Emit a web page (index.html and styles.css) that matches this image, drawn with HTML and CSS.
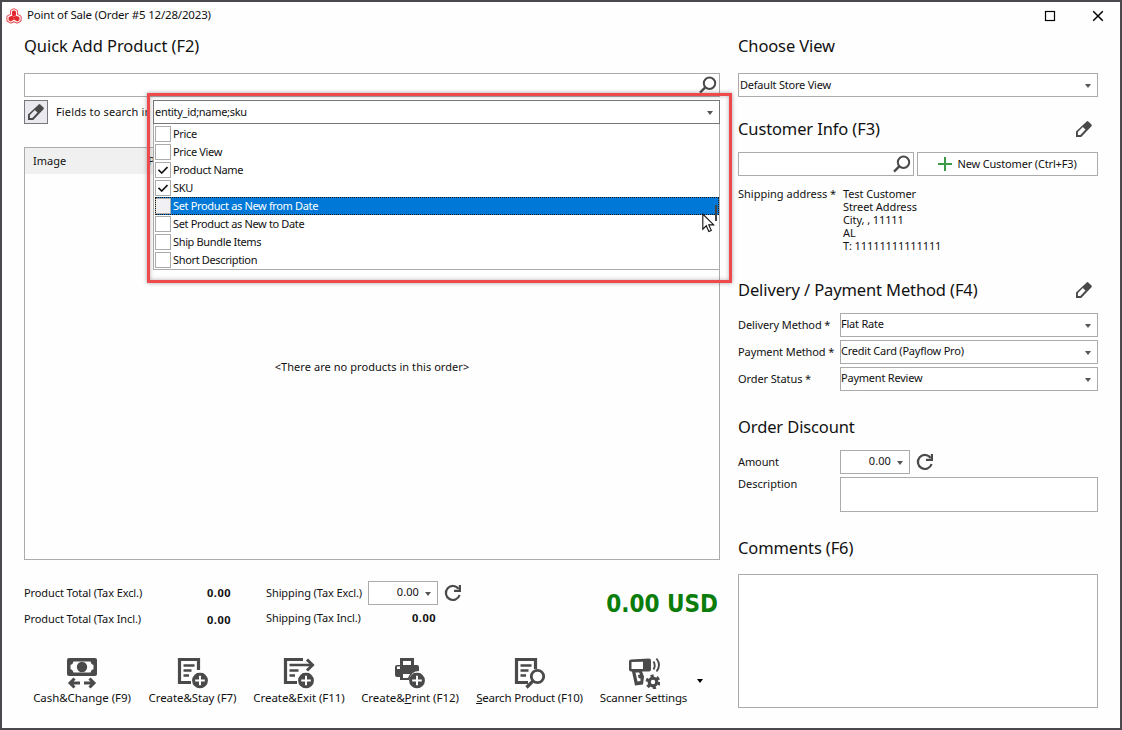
FILE: index.html
```html
<!DOCTYPE html>
<html lang="en">
<head>
  <meta charset="UTF-8">
  <meta name="viewport" content="width=device-width, initial-scale=1.0">
  <title>Point of Sale</title>
  <link rel="stylesheet" href="styles.css">
</head>
<body>
  <!-- shared icons -->
  <svg class="sprite" width="0" height="0">
    <symbol id="search" viewBox="0 0 18 18">
      <circle cx="10.5" cy="7.2" r="5.7" fill="none" stroke="#4a4a4a" stroke-width="2"/>
      <path d="M6.5 11.2L1 16.6" stroke="#4a4a4a" stroke-width="2.4"/>
    </symbol>
    <symbol id="pencil" viewBox="0 0 18 18">
      <path fill="#4a4a4a" fill-rule="evenodd" d="M1 17v-5.400L11.700 1.400q.8-.8 1.600 0l3.200 3.200q.8.8 0 1.600L6.200 17zM2.900 14.900h2.400l5.200-5.300-2.700-2.600-4.900 5z"/>
    </symbol>
    <symbol id="refresh" viewBox="0 0 18 18">
      <path d="M14.600 4.900A7 7 0 1 0 15.600 11" fill="none" stroke="#4a4a4a" stroke-width="2.200"/>
      <path d="M17 1v7h-7V5.800h4.800V1z" fill="#4a4a4a"/>
    </symbol>
    <symbol id="check" viewBox="0 0 10 8">
      <path d="M.5 3.800l3.200 3.200L9.500 1" fill="none" stroke="#111" stroke-width="1.600"/>
    </symbol>
    <symbol id="plus-badge" viewBox="0 0 16 16">
      <circle cx="8" cy="8" r="7.900" fill="#4a4a4a"/>
      <path d="M8 3.200v9.600M3.200 8h9.600" stroke="#fff" stroke-width="2"/>
    </symbol>
  </svg>

  <div class="window">
    <div class="titlebar">
      <svg class="logo" viewBox="0 0 16 16">
        <path d="M8 1.800l2.300 1.300v3.700l3.700 2v3.500L11.300 14 8 12.500 4.700 14 2 12.300V8.800l3.700-2V3.100z" fill="#fff" stroke="#e4474b" stroke-width="3.200" stroke-linejoin="round"/>
        <path d="M8 1.800l2.300 1.300v3.700l3.700 2v3.500L11.300 14 8 12.500 4.700 14 2 12.300V8.800l3.700-2V3.100z" fill="#fff" stroke="#fff" stroke-width="1.200" stroke-linejoin="round"/>
        <path d="M8 2.200l2 1.300v3.700L8 8.800 6 7.200V3.500zM2.600 9.100L6 7.700l2 1.300-.2 2.700-3.200 1.700-2-1.200zM13.400 9.100L10 7.700 8 9l.2 2.700 3.200 1.700 2-1.200z" fill="#e2262c"/>
      </svg>
      <span class="title">Point of Sale (Order #5 12/28/2023)</span>
      <svg class="win-btn" viewBox="0 0 12 12"><rect x="1.500" y="1.500" width="9" height="9" fill="none" stroke="#000" stroke-width="1.200"/></svg>
      <svg class="win-btn" viewBox="0 0 12 12"><path d="M1.200 1.200l9.600 9.600M10.800 1.200L1.200 10.800" stroke="#000" stroke-width="1.500"/></svg>
    </div>

    <div class="content">
      <div class="left">
        <h2 class="quick">Quick Add Product (F2)</h2>
        <div class="field search-field"><svg class="icon"><use href="#search"/></svg></div>

        <div class="fields-row">
          <button class="edit-btn"><svg class="icon"><use href="#pencil"/></svg></button>
          <label class="fields-label">Fields to search in</label>
          <div class="combo">
            <div class="combo-value">entity_id;name;sku<i class="arrow"></i></div>
            <ul class="combo-list">
              <li><span class="box"></span><span class="name">Price</span></li>
              <li><span class="box"></span><span class="name">Price View</span></li>
              <li><span class="box"><svg><use href="#check"/></svg></span><span class="name">Product Name</span></li>
              <li><span class="box"><svg><use href="#check"/></svg></span><span class="name">SKU</span></li>
              <li class="selected"><span class="box"></span><span class="name">Set Product as New from Date</span></li>
              <li><span class="box"></span><span class="name">Set Product as New to Date</span></li>
              <li><span class="box"></span><span class="name">Ship Bundle Items</span></li>
              <li><span class="box"></span><span class="name">Short Description</span></li>
            </ul>
            <div class="highlight"></div>
            <span class="scroll-mark"></span>
            <svg class="cursor" viewBox="0 0 13 20"><path d="M.8 1v15.200l3.500-3.400 2.500 5.700 2.500-1.100-2.500-5.500h4.900z" fill="#fff" stroke="#111" stroke-width="1.100"/></svg>
          </div>
        </div>

        <div class="products">
          <div class="products-head"><span class="col-image">Image</span><span>P</span></div>
          <div class="products-empty">&lt;There are no products in this order&gt;</div>
        </div>

        <div class="totals">
          <div class="total-col product-total">
            <div class="total-row"><span>Product Total (Tax Excl.)</span><b>0.00</b></div>
            <div class="total-row"><span>Product Total (Tax Incl.)</span><b>0.00</b></div>
          </div>
          <div class="total-col shipping-total">
            <div class="total-row"><span>Shipping (Tax Excl.)</span><div class="field spin">0.00<i class="arrow"></i></div><svg class="icon"><use href="#refresh"/></svg></div>
            <div class="total-row second"><span>Shipping (Tax Incl.)</span><b>0.00</b></div>
          </div>
          <div class="grand-total">0.00 USD</div>
        </div>

        <div class="toolbar">
          <div class="tool">
            <svg viewBox="0 0 32 32">
              <path fill="#4a4a4a" fill-rule="evenodd" d="M3 1h26q2 0 2 2v14q0 2-2 2H3q-2 0-2-2V3q0-2 2-2zM7.500 4.500Q7 7.500 4.500 8v4q2.500.5 3 3.500h17q.5-3 3-3.500V8q-2.500-.5-3-3.500z"/>
              <circle cx="16" cy="10" r="5.200" fill="#4a4a4a"/>
              <path d="M14 26H5M18 26h9M8.500 21.500L4 26l4.500 4.500M23.500 21.500L28 26l-4.500 4.500" fill="none" stroke="#4a4a4a" stroke-width="3"/>
            </svg>
            <span>Cash&amp;Change (F9)</span>
          </div>
          <div class="tool">
            <svg viewBox="0 0 32 32">
              <path d="M14 25.500H2.500V2.500h19V13" fill="none" stroke="#4a4a4a" stroke-width="3.200"/>
              <path d="M6.500 8.500h11M6.500 13.500h8M6.500 18.500h5.500" stroke="#4a4a4a" stroke-width="2.400"/>
              <use href="#plus-badge" x="15" y="15.500" width="16" height="16"/>
            </svg>
            <span>Create&amp;Stay (F7)</span>
          </div>
          <div class="tool">
            <svg viewBox="0 0 32 32">
              <path d="M14 25.500H2.500V2.500H20" fill="none" stroke="#4a4a4a" stroke-width="3.200"/>
              <path d="M6.500 8h22M6.500 13.500h9M6.500 18.500h5.500" stroke="#4a4a4a" stroke-width="2.600"/>
              <path d="M24 2.500L29.500 8 24 13.500" fill="none" stroke="#4a4a4a" stroke-width="3"/>
              <use href="#plus-badge" x="15" y="15.500" width="16" height="16"/>
            </svg>
            <span>Create&amp;Exit (F11)</span>
          </div>
          <div class="tool">
            <svg viewBox="0 0 32 32">
              <path fill="#4a4a4a" fill-rule="evenodd" d="M6 8V1h14v7h3q2 0 2 2v4q-8 0-10 9H6v-3H3q-2 0-2-2v-8q0-2 2-2zM9 4v4h8V4zM3 9.500v2.500h3V9.500zM9 17v4h5l2-4z"/>
              <use href="#plus-badge" x="15" y="15.500" width="16" height="16"/>
            </svg>
            <span>Create&amp;<u>P</u>rint (F12)</span>
          </div>
          <div class="tool">
            <svg viewBox="0 0 32 32">
              <path d="M14 25.500H2.500V2.500h19V12" fill="none" stroke="#4a4a4a" stroke-width="3.200"/>
              <path d="M6.500 8.500h11M6.500 13.500h8M6.500 18.500h5.500" stroke="#4a4a4a" stroke-width="2.400"/>
              <circle cx="23.500" cy="19.500" r="6.200" fill="#fff" stroke="#4a4a4a" stroke-width="2.800"/>
              <path d="M19 24l-6.500 6.500" stroke="#4a4a4a" stroke-width="3.200"/>
            </svg>
            <span><u>S</u>earch Product (F10)</span>
          </div>
          <div class="tool">
            <svg viewBox="0 0 32 32">
              <path fill="#4a4a4a" fill-rule="evenodd" d="M3 2.500l18-1q2 0 2 2v9q0 2-2 2h-7l2 5-1 8-8 1L4 14.500H3q-2 0-2-2v-8q0-2 2-2zM3.500 5v7H15V4.800zM7.500 15.500l2 9 3-.5v-2.500l-2-.5-.5-3 2-.5-.8-2z"/>
              <path d="M25.500 4.500q2.500 4 0 8M28.500 1.500q5 6.500 0 13" fill="none" stroke="#4a4a4a" stroke-width="1.900"/>
              <circle cx="25" cy="25" r="3.800" fill="#fff" stroke="#4a4a4a" stroke-width="3.200"/>
              <circle cx="25" cy="25" r="6" fill="none" stroke="#4a4a4a" stroke-width="2.800" stroke-dasharray="3.140 3.140"/>
            </svg>
            <span>Scanner Settings</span>
          </div>
          <i class="arrow more"></i>
        </div>
      </div>

      <div class="right">
        <h2 class="view-h">Choose View</h2>
        <div class="field select store">Default Store View<i class="arrow"></i></div>

        <div class="head-row customer"><h2>Customer Info (F3)</h2><svg class="icon"><use href="#pencil"/></svg></div>
        <div class="customer-row">
          <div class="field search-field"><svg class="icon"><use href="#search"/></svg></div>
          <button class="new-btn"><svg viewBox="0 0 14 14"><path d="M7 0v14M0 7h14" stroke="#3c9a46" stroke-width="2"/></svg>New Customer (Ctrl+F3)</button>
        </div>
        <div class="address">
          <span>Shipping address *</span>
          <div class="address-lines">Test Customer<br>Street Address<br>City, , 11111<br>AL<br>T: 11111111111111</div>
        </div>

        <div class="head-row delivery"><h2>Delivery / Payment Method (F4)</h2><svg class="icon"><use href="#pencil"/></svg></div>
        <div class="form">
          <label>Delivery Method *</label><div class="field select">Flat Rate<i class="arrow"></i></div>
          <label>Payment Method *</label><div class="field select">Credit Card (Payflow Pro)<i class="arrow"></i></div>
          <label>Order Status *</label><div class="field select">Payment Review<i class="arrow"></i></div>
        </div>

        <h2 class="discount">Order Discount</h2>
        <div class="form">
          <label>Amount</label>
          <div class="amount"><div class="field spin">0.00<i class="arrow"></i></div><svg class="icon"><use href="#refresh"/></svg></div>
          <label class="desc-label">Description</label><div class="field desc"></div>
        </div>

        <h2 class="comments-h">Comments (F6)</h2>
        <div class="field comments"></div>
      </div>
    </div>
  </div>
</body>
</html>
```
FILE: styles.css
```css
* {
  box-sizing: border-box;
}

body {
  margin: 0;
  font-family: "Noto Sans", "Open Sans", sans-serif;
  font-size: 11px;
  color: #111;
}

.sprite {
  position: absolute;
}

.window {
  width: 1122px;
  height: 730px;
  border: 2px solid #4a494d;
  background: #fefefe;
  overflow: hidden;
}

.titlebar {
  display: flex;
  align-items: center;
  height: 26px;
  padding: 0 16px 0 4px;
}

.logo {
  width: 16px;
  height: 16px;
  margin: 2px 5px 0 0;
}

.title {
  flex: 1;
  padding-bottom: 2px;
  font-size: 11.5px;
  letter-spacing: -0.18px;
  white-space: nowrap;
}

.win-btn {
  width: 12px;
  height: 12px;
  margin-left: 36px;
  margin-top: 2px;
}

.content {
  display: flex;
  gap: 18px;
  padding: 6px 22px 0;
}

.left {
  width: 696px;
}

.right {
  width: 360px;
}

h2 {
  margin: 0;
  height: 24px;
  line-height: 24px;
  font-size: 16.5px;
  font-weight: 400;
  letter-spacing: -0.12px;
  white-space: nowrap;
}

.icon {
  width: 18px;
  height: 18px;
  flex: none;
}

.field {
  display: flex;
  align-items: center;
  height: 24px;
  border: 1px solid #ababab;
  background: #fff;
}

.search-field {
  justify-content: flex-end;
  padding-right: 2px;
}

.quick {
  margin-bottom: 15px;
  letter-spacing: -0.05px;
}

.arrow {
  width: 0;
  height: 0;
  margin-left: auto;
  border: 3.5px solid transparent;
  border-top: 4px solid #555;
  border-bottom: 0;
}

/* field picker */
.fields-row {
  display: flex;
  align-items: center;
  height: 24px;
  margin-top: 3px;
}

.edit-btn {
  display: flex;
  align-items: center;
  justify-content: center;
  width: 24px;
  height: 24px;
  padding: 0;
  border: 1px solid #77777b;
  background: #e9e9ef;
}

.fields-label {
  width: 100px;
  padding: 0 0 2px 8px;
  letter-spacing: 0.15px;
  white-space: nowrap;
  overflow: hidden;
}

.combo {
  position: relative;
  z-index: 2;
  width: 567px;
  margin-left: auto;
}

.combo-value {
  display: flex;
  align-items: center;
  height: 24px;
  padding: 0 6px 2px 1px;
  border: 1px solid #777;
  background: #fff;
  letter-spacing: -0.3px;
}

.combo-value .arrow {
  margin-top: 3px;
}

.combo-list {
  position: absolute;
  top: 24px;
  left: 0;
  width: 567px;
  height: 146px;
  margin: 0;
  padding: 1px 0 0 1px;
  list-style: none;
  border: 1px solid #ababab;
  border-top: 0;
  background: #fff;
}

.combo-list li {
  display: flex;
  align-items: center;
  height: 18px;
  letter-spacing: -0.35px;
}

.name {
  padding-bottom: 2px;
}

.box {
  display: flex;
  align-items: center;
  justify-content: center;
  width: 16px;
  height: 16px;
  margin-right: 2px;
  border: 1px solid #ababab;
  background: #fff;
}

.box svg {
  width: 10px;
  height: 8px;
}

.combo-list .selected {
  color: #fff;
  background: #0078d7;
  outline: 1px dotted #201808;
  outline-offset: -1px;
}

.selected .box {
  background: #f0f0f5;
}

.highlight {
  position: absolute;
  top: -7px;
  left: -6px;
  width: 585px;
  height: 190px;
  border: 3px solid #ed4a4d;
  box-shadow: 0 0 4px rgba(90, 60, 60, 0.5), inset 0 0 4px rgba(90, 60, 60, 0.4);
}

.scroll-mark {
  position: absolute;
  top: 105px;
  right: 3px;
  width: 2px;
  height: 16px;
  background: #444;
}

.cursor {
  position: absolute;
  top: 113px;
  left: 549px;
  width: 13px;
  height: 20px;
}

/* products */
.products {
  height: 413px;
  margin-top: 23px;
  border: 1px solid #ababab;
}

.products-head {
  display: flex;
  align-items: center;
  width: 140px;
  height: 26px;
  padding: 0 0 2px 8px;
  background: #f0f0f0;
}

.col-image {
  width: 115px;
  flex: none;
}

.products-empty {
  padding-top: 185px;
  text-align: center;
  letter-spacing: 0.06px;
}

/* totals */
.totals {
  display: flex;
  height: 67px;
  padding-top: 21px;
}

.total-row {
  display: flex;
  align-items: center;
  height: 24px;
  white-space: nowrap;
}

.total-row + .total-row {
  margin-top: 2px;
}

.total-row + .second {
  margin-top: 1px;
}

.total-row span {
  padding-bottom: 2px;
  letter-spacing: -0.1px;
}

.total-row b {
  letter-spacing: 0.5px;
}

.product-total {
  width: 207px;
}

.product-total .total-row {
  justify-content: space-between;
}

.product-total .total-row:first-child b {
  padding-bottom: 2px;
}

.shipping-total {
  width: 232px;
  margin-left: 35px;
}

.shipping-total span {
  width: 102px;
}

.shipping-total b {
  width: 68px;
  padding-bottom: 2px;
  text-align: right;
}

.total-row .icon {
  margin-left: 6px;
}

.spin {
  justify-content: flex-end;
  width: 70px;
  padding: 0 6px 3px 0;
  letter-spacing: 0.1px;
}

.spin .arrow {
  margin: 4px 0 0 6px;
}

.grand-total {
  margin-left: auto;
  padding-right: 2px;
  font-family: "DejaVu Sans Condensed", "DejaVu Sans", sans-serif;
  font-stretch: condensed;
  font-size: 24px;
  line-height: 46px;
  font-weight: 700;
  color: #0a7d0a;
  white-space: nowrap;
}

/* toolbar */
.toolbar {
  display: grid;
  grid-template-columns: 100px 89px 92px 98px 109px 87px 10px;
  column-gap: 16px;
  padding: 30px 0 0 8px;
}

.tool {
  display: flex;
  flex-direction: column;
  align-items: center;
  font-size: 11.5px;
  letter-spacing: -0.06px;
  white-space: nowrap;
}

.tool svg {
  width: 32px;
  height: 32px;
}

.tool span {
  line-height: 18px;
}

.tool:nth-child(n+5) span {
  letter-spacing: -0.2px;
}

.more {
  margin: 22px 0 0 -6px;
  border-top-color: #000;
}

/* right side */
.view-h {
  margin-bottom: 15px;
}

.select {
  padding: 0 6px 3px 0;
  letter-spacing: -0.22px;
}

.select .arrow {
  margin-top: 4px;
}

.store {
  padding: 0 6px 2px 1px;
}

.head-row {
  display: flex;
  align-items: center;
  justify-content: space-between;
  padding-right: 5px;
  margin-bottom: 11px;
}

.customer {
  margin-top: 20px;
}

.customer-row {
  display: grid;
  grid-template-columns: 176px 181px;
  gap: 3px;
}

.new-btn {
  display: flex;
  align-items: center;
  justify-content: center;
  height: 24px;
  padding: 0 0 1px;
  border: 1px solid #ababab;
  background: #fff;
  font: inherit;
  letter-spacing: -0.16px;
  color: #111;
}

.new-btn svg {
  width: 14px;
  height: 14px;
  margin-right: 5px;
}

.address {
  display: flex;
  height: 65px;
  margin-top: 11px;
  line-height: 13px;
  letter-spacing: -0.1px;
}

.address span {
  width: 105px;
  letter-spacing: 0;
  white-space: nowrap;
}

.delivery {
  margin-top: 26px;
}

.form {
  display: grid;
  grid-template-columns: 102px 258px;
  row-gap: 3px;
  align-items: center;
}

.form label {
  padding-bottom: 2px;
  letter-spacing: -0.1px;
  white-space: nowrap;
}

.discount {
  margin: 24px 0 11px;
}

.amount {
  display: flex;
  align-items: center;
  gap: 6px;
}

.form .desc-label {
  align-self: start;
  margin-top: -1px;
  letter-spacing: 0;
}

.desc {
  height: 35px;
}

.comments-h {
  margin: 24px 0 14px;
}

.comments {
  height: 134px;
}
```
